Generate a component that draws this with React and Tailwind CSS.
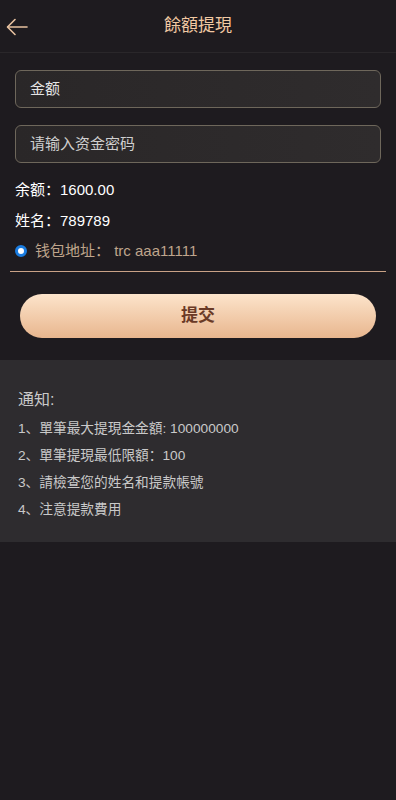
export default function App() {
  const font = { fontFamily: '"Liberation Sans", "Noto Sans CJK SC", sans-serif' };
  return (
    <div className="min-h-[800px] w-full bg-[#1e1b1f]" style={font}>
      {/* header */}
      <div className="h-[53px] flex items-center relative border-b border-[#2a272a]">
        <button className="absolute left-[6px] top-[17px] text-[#e8c2a0]">
          <svg width="22" height="20" viewBox="0 0 22 20" fill="none" stroke="currentColor" strokeWidth="1.6" strokeLinecap="round" strokeLinejoin="round">
            <path d="M21 10H2" />
            <path d="M9 2.5L1.5 10L9 17.5" />
          </svg>
        </button>
        <h1 className="flex-1 text-center text-[17px] text-[#f1c9a3]">餘額提現</h1>
      </div>

      <div className="px-[15px] pt-[17px]">
        <div className="h-[38px] rounded-[6px] border border-[#6e675b] bg-gradient-to-r from-[#2a2728] to-[#2f2c2d] flex items-center px-[14px] text-[15px] text-[#e4e4e4]">
          金额
        </div>
        <div className="mt-[17px] h-[38px] rounded-[6px] border border-[#6e675b] bg-gradient-to-r from-[#2a2728] to-[#2f2c2d] flex items-center px-[14px] text-[15px] text-[#cfcfcf]">
          请输入资金密码
        </div>
        <div className="mt-[17px] flex flex-col gap-[10.5px] text-[15px]">
          <div className="text-white leading-[20px]">余额：1600.00</div>
          <div className="text-white leading-[20px]">姓名：789789</div>
          <div className="flex items-center gap-[8px] leading-[20px]">
            <span className="w-[12px] h-[12px] rounded-full border-[3px] border-[#1a7ce0] bg-white" />
            <span className="text-[#bfa58c]">钱包地址： trc aaa11111</span>
          </div>
        </div>
      </div>
      <div className="mx-[10px] mt-[10px] h-px bg-[#c9a286]" />

      <div className="px-[20px] pt-[22px] pb-[22px]">
        <button className="w-full h-[44px] rounded-full bg-gradient-to-b from-[#fce4cb] to-[#e8b68e] text-[#6a3a26] font-bold text-[17px]">
          提交
        </button>
      </div>

      <div className="bg-[#2e2c2f] px-[18px] pt-[29px] pb-[23px] text-[#c9c9c9]">
        <div className="text-[16px] leading-[22px]">通知:</div>
        <div className="mt-[9px] flex flex-col gap-[9px] text-[13.7px] leading-[18px]">
          <div>1、單筆最大提現金金額: 100000000</div>
          <div>2、單筆提現最低限額：100</div>
          <div>3、請檢查您的姓名和提款帳號</div>
          <div>4、注意提款費用</div>
        </div>
      </div>
    </div>
  );
}
